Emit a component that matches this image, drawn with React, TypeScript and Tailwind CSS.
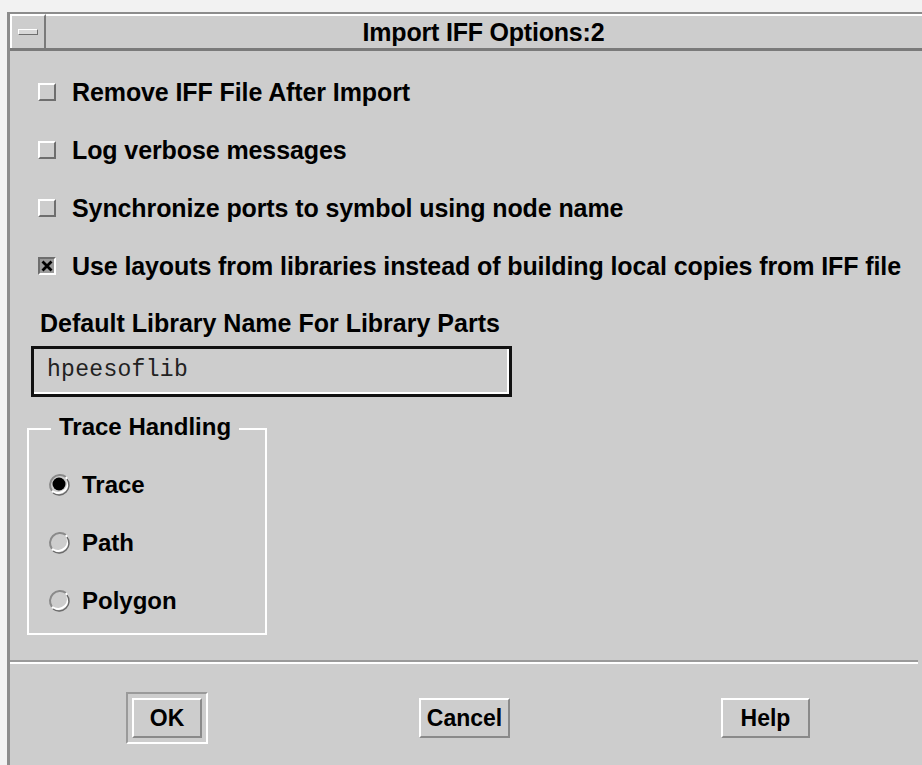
import type { ReactNode } from "react";

const ui = "font-['Liberation_Sans',Arial,sans-serif] font-bold text-black";

const CheckRow = ({ checked, children }: { checked?: boolean; children: ReactNode }) => (
  <div className="flex items-center h-[58px] pl-[28px]">
    <span
      className={`w-[18px] h-[18px] flex items-center justify-center border-2 ${
        checked
          ? "bg-[#9a9a9a] border-t-[#6e6e6e] border-l-[#6e6e6e] border-b-white border-r-white"
          : "bg-[#cdcdcd] border-t-white border-l-white border-b-[#6e6e6e] border-r-[#6e6e6e]"
      }`}
    >
      {checked && (
        <svg width="12" height="12" viewBox="0 0 12 12">
          <path d="M1.5 1.5 L10.5 10.5 M10.5 1.5 L1.5 10.5" stroke="#000" strokeWidth="2.8" />
        </svg>
      )}
    </span>
    <span className={`${ui} ml-[16px] text-[25px] leading-[28px] tracking-[-0.1px]`}>{children}</span>
  </div>
);

const Radio = ({ on, label }: { on?: boolean; label: string }) => (
  <div className="flex items-center h-[58px] pl-[19px]">
    <svg width="24" height="24" viewBox="0 0 24 24">
      <path d="M4 18 A10 10 0 0 1 18 4" fill="none" stroke="#8a8a8a" strokeWidth="2" />
      <path d="M18 4 A10 10 0 0 1 4 18" fill="none" stroke="#fff" strokeWidth="2" />
      <path d="M5 19 A10 10 0 0 0 19 5" fill="none" stroke="#6a6a6a" strokeWidth="1.5" transform="translate(0 1)" />
      {on && <circle cx="11" cy="11" r="6.5" fill="#000" />}
    </svg>
    <span className={`${ui} ml-[10px] text-[24px] leading-[28px]`}>{label}</span>
  </div>
);

const Btn = ({ label, w }: { label: string; w: string }) => (
  <button
    className={`${w} h-[40px] bg-[#cdcdcd] border-2 border-t-white border-l-white border-b-[#8a8a8a] border-r-[#8a8a8a] font-['Liberation_Sans_Narrow','Liberation_Sans',sans-serif] font-bold text-[23px] leading-[28px] text-black`}
  >
    {label}
  </button>
);

export default function App() {
  return (
    <div className="w-[922px] h-[765px] bg-[#f2f2f2] pt-[12px] pl-[7px] overflow-hidden">
      <div className="w-[930px] h-[760px] bg-[#cdcdcd] border-l-[3px] border-t-[2px] border-[#8c8c8c] flex flex-col">
        {/* title bar */}
        <div className="flex h-[37px] border-b-[3px] border-[#7a7a7a]">
          <div className="w-[36px] border-r-2 border-[#7a7a7a] border-t-2 border-l-2 border-t-white border-l-white flex items-center justify-center">
            <span className="w-[20px] h-[6px] border border-t-white border-l-white border-b-[#6e6e6e] border-r-[#6e6e6e] bg-[#d8d8d8]" />
          </div>
          <div className="flex-1 border-t-2 border-white flex items-center justify-center pr-[16px]">
            <span className={`${ui} text-[25px] leading-[28px] tracking-[-0.2px]`}>Import IFF Options:2</span>
          </div>
        </div>

        <div className="pt-[12px]">
          <CheckRow>Remove IFF File After Import</CheckRow>
          <CheckRow>Log verbose messages</CheckRow>
          <CheckRow>Synchronize ports to symbol using node name</CheckRow>
          <CheckRow checked>Use layouts from libraries instead of building local copies from IFF file</CheckRow>
        </div>

        <div className="pl-[30px] pt-[16px]">
          <div className={`${ui} text-[25px] leading-[24px]`}>Default Library Name For Library Parts</div>
          <div className="mt-[11px] -ml-[9px] w-[481px] h-[51px] border-[3px] border-[#111] flex">
            <div className="flex-1 flex items-center pl-[13px] border-r-2 border-b-2 border-white">
              <span className="font-['Liberation_Mono','DejaVu_Sans_Mono',monospace] text-[23px] text-[#222] tracking-[0.3px]">
                hpeesoflib
              </span>
            </div>
          </div>
        </div>

        {/* trace handling group */}
        <div className="relative ml-[17px] mt-[31px] w-[240px] h-[207px] border-2 border-white">
          <span className={`${ui} absolute -top-[16px] left-[22px] bg-[#cdcdcd] px-[8px] text-[24px] leading-[26px]`}>
            Trace Handling
          </span>
          <div className="pt-[26px]">
            <Radio on label="Trace" />
            <Radio label="Path" />
            <Radio label="Polygon" />
          </div>
        </div>

        <div className="mt-[25px] w-[908px] border-t-2 border-[#9a9a9a] border-b-2 border-b-white" />

        <div className="flex items-start mt-[28px]">
          <div className="ml-[116px] border-2 border-t-[#9a9a9a] border-l-[#9a9a9a] border-b-white border-r-white p-[4px]">
            <Btn label="OK" w="w-[70px]" />
          </div>
          <div className="ml-[211px] mt-[6px]">
            <Btn label="Cancel" w="w-[91px]" />
          </div>
          <div className="ml-[211px] mt-[6px]">
            <Btn label="Help" w="w-[89px]" />
          </div>
        </div>
      </div>
    </div>
  );
}
